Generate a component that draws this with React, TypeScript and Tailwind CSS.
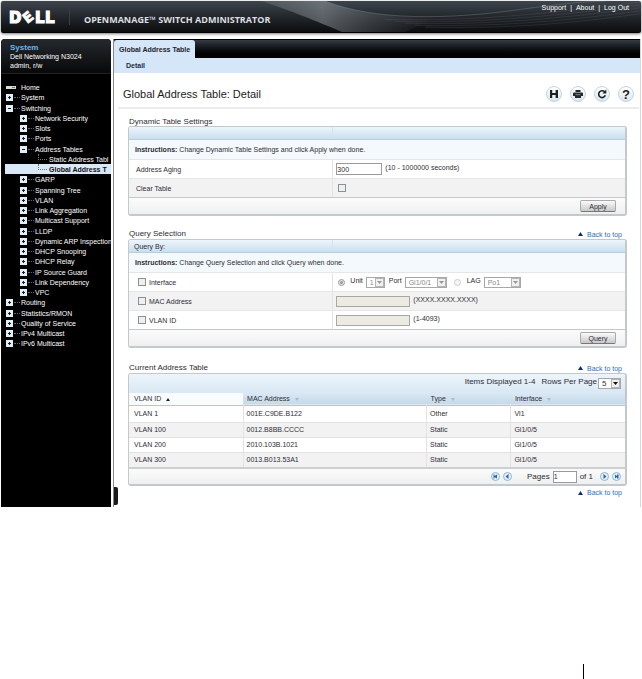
import type { ReactNode } from "react";

type TreeItem = {
  label: string;
  level: 0 | 1 | 2;
  icon?: "plus" | "minus" | "home";
  active?: boolean;
};

const tree: TreeItem[] = [
  { label: "Home", level: 0, icon: "home" },
  { label: "System", level: 0, icon: "plus" },
  { label: "Switching", level: 0, icon: "minus" },
  { label: "Network Security", level: 1, icon: "plus" },
  { label: "Slots", level: 1, icon: "plus" },
  { label: "Ports", level: 1, icon: "plus" },
  { label: "Address Tables", level: 1, icon: "minus" },
  { label: "Static Address Tabl", level: 2 },
  { label: "Global Address T", level: 2, active: true },
  { label: "GARP", level: 1, icon: "plus" },
  { label: "Spanning Tree", level: 1, icon: "plus" },
  { label: "VLAN", level: 1, icon: "plus" },
  { label: "Link Aggregation", level: 1, icon: "plus" },
  { label: "Multicast Support", level: 1, icon: "plus" },
  { label: "LLDP", level: 1, icon: "plus" },
  { label: "Dynamic ARP Inspection", level: 1, icon: "plus" },
  { label: "DHCP Snooping", level: 1, icon: "plus" },
  { label: "DHCP Relay", level: 1, icon: "plus" },
  { label: "IP Source Guard", level: 1, icon: "plus" },
  { label: "Link Dependency", level: 1, icon: "plus" },
  { label: "VPC", level: 1, icon: "plus" },
  { label: "Routing", level: 0, icon: "plus" },
  { label: "Statistics/RMON", level: 0, icon: "plus" },
  { label: "Quality of Service", level: 0, icon: "plus" },
  { label: "IPv4 Multicast", level: 0, icon: "plus" },
  { label: "IPv6 Multicast", level: 0, icon: "plus" },
];

const addresses = [
  { vlan: "VLAN 1", mac: "001E.C9DE.B122", type: "Other", iface: "Vl1" },
  { vlan: "VLAN 100", mac: "0012.B8BB.CCCC", type: "Static", iface: "Gi1/0/5" },
  { vlan: "VLAN 200", mac: "2010.103B.1021", type: "Static", iface: "Gi1/0/5" },
  { vlan: "VLAN 300", mac: "0013.B013.53A1", type: "Static", iface: "Gi1/0/5" },
];

function DellLogo() {
  return (
    <svg
      width="50"
      height="24"
      viewBox="0 0 50 24"
      role="img"
      aria-label="Dell"
      className="relative overflow-visible"
      fill="#fff"
      stroke="#fff"
      strokeWidth="1.2"
      fontFamily="DejaVu Sans"
      fontWeight="700"
      fontSize="15"
    >
      <text x="-1" y="18">D</text>
      <text x="13" y="17" fontSize="14" strokeWidth=".7" transform="rotate(-38 18 12)">E</text>
      <text x="25" y="18">L</text>
      <text x="35" y="18">L</text>
    </svg>
  );
}

function TreeIcon({ icon }: { icon: "plus" | "minus" | "home" }) {
  if (icon === "home") {
    return (
      <svg width="10" height="8" viewBox="0 0 10 8" aria-hidden="true">
        <rect x="0" y="3" width="10" height="3" fill="#d9dcdb" />
        <rect x="6" y="4" width="3" height="1" fill="#3f9a45" />
      </svg>
    );
  }
  return (
    <svg width="7" height="7" viewBox="0 0 7 7" className="shrink-0" aria-hidden="true">
      <rect width="7" height="7" fill="#e4eef5" />
      <rect x="2" y="3" width="3" height="1" fill="#16202b" />
      {icon === "plus" && <rect x="3" y="2" width="1" height="3" fill="#16202b" />}
    </svg>
  );
}

function TreeRow({ item }: { item: TreeItem }) {
  if (item.level === 2) {
    return (
      <li className="h-[10px] nth-[4n+2]:h-[11px] pl-[4px]">
        <a
          href="#"
          className={
            item.active
              ? "flex h-full items-center whitespace-nowrap bg-[#d9e8f7] pl-[33px] font-bold text-[#111]"
              : "flex h-full items-center whitespace-nowrap pl-[33px]"
          }
        >
          <span className="mr-[2px] h-[6px] w-[9px] shrink-0 self-start border-b border-l border-dotted border-[#777]" />
          {item.label}
        </a>
      </li>
    );
  }
  return (
    <li className="h-[10px] nth-[4n+2]:h-[11px]">
      <a
        href="#"
        className={
          item.level === 1
            ? "flex h-full items-center whitespace-nowrap pl-[19px]"
            : "flex h-full items-center whitespace-nowrap pl-[5px]"
        }
      >
        <TreeIcon icon={item.icon ?? "plus"} />
        {item.icon === "home" ? (
          <span className="w-[5px] shrink-0" />
        ) : (
          <span className="mx-[1px] w-[6px] shrink-0 border-t border-dotted border-[#666]" />
        )}
        {item.label}
      </a>
    </li>
  );
}

function Sidebar() {
  return (
    <aside className="w-[110px] shrink-0 overflow-hidden rounded-t-sm bg-black text-white">
      <div className="border-b border-[#222] bg-linear-to-b from-[#25292e] to-[#08090a] px-[9px] pt-[4px] pb-[3px] whitespace-nowrap leading-[9px]">
        <p className="text-[8px] font-bold text-[#6cb6ee]">System</p>
        <p>Dell Networking N3024</p>
        <p>admin, r/w</p>
      </div>
      <nav aria-label="Navigation tree" className="pt-[8px]">
        <ul>
          {tree.map((item) => (
            <TreeRow key={item.label} item={item} />
          ))}
        </ul>
      </nav>
    </aside>
  );
}

function RoundButton({ label, children }: { label: string; children: ReactNode }) {
  return (
    <button
      type="button"
      aria-label={label}
      className="flex size-[16px] items-center justify-center rounded-full border border-[#c3d3df] bg-linear-to-b from-white to-[#dbe6ee]"
    >
      {children}
    </button>
  );
}

function Toolbar() {
  return (
    <div className="flex gap-[8px]">
      <RoundButton label="Save">
        <svg width="10" height="10" viewBox="0 0 10 10">
          <path d="M1 1h8v8H1z" fill="#1d2126" />
          <path d="M3.2 1h3.4v3H3.2zM3.2 6h3.4v3H3.2z" fill="#eef3f7" />
        </svg>
      </RoundButton>
      <RoundButton label="Print">
        <svg width="10" height="10" viewBox="0 0 10 10" fill="#24282d">
          <path d="M2.5 1h5v2h-5zM1 3.4h8a1 1 0 0 1 1 1V7H0V4.400a1 1 0 0 1 1-1z" />
          <path d="M2 6h6v3H2z" />
          <path d="M2.500 5.500h5v.6h-5z" fill="#b9c2c9" />
        </svg>
      </RoundButton>
      <RoundButton label="Refresh">
        <svg width="10" height="10" viewBox="0 0 10 10">
          <path d="M7.600 2.900A3.400 3.400 0 1 0 8.300 6.200" fill="none" stroke="#1d2126" strokeWidth="1.600" />
          <path d="M9.300.6v3.800H5.500z" fill="#1d2126" />
        </svg>
      </RoundButton>
      <RoundButton label="Help">
        <span className="text-[13px] leading-none font-bold text-[#1d2126]">?</span>
      </RoundButton>
    </div>
  );
}

function BackToTop() {
  return (
    <a href="#top" className="flex items-center gap-[4px] pr-[5px] text-[#2f6dbb]">
      <svg width="5" height="4" viewBox="0 0 5 4" aria-hidden="true">
        <path d="M2.500 0L5 4H0z" fill="#0b2f6b" />
      </svg>
      Back to top
    </a>
  );
}

function Panel({ children }: { children: ReactNode }) {
  return (
    <div className="overflow-hidden rounded-[3px] border border-[#c2c8cc] border-r-2 border-b-2 bg-white">
      {children}
    </div>
  );
}

function PanelHeader({ children }: { children?: ReactNode }) {
  return (
    <div className="grid h-[13px] grid-cols-[41fr_59fr] items-center border-b border-[#b9cddb] bg-linear-to-b from-[#edf5fb] to-[#c9dff0]">
      <span className="pl-[5px]">{children}</span>
      <span className="h-full border-l border-[#d3e2ed]" />
    </div>
  );
}

function Instructions({ children }: { children: ReactNode }) {
  return (
    <p className="flex h-[19px] items-center bg-[#f3f9fd] pl-[6px] whitespace-pre">
      <b>Instructions: </b>
      {children}
    </p>
  );
}

function FormRow({ shaded, label, children }: { shaded?: boolean; label: ReactNode; children: ReactNode }) {
  return (
    <div
      className={
        shaded
          ? "grid h-[19px] grid-cols-[41fr_59fr] border-t border-[#e6e6e6] bg-[#f2f2f2]"
          : "grid h-[19px] grid-cols-[41fr_59fr] border-t border-[#e6e6e6]"
      }
    >
      <div className="flex items-center">{label}</div>
      <div className="flex items-center border-l border-[#e3e3e3] pl-[3px]">{children}</div>
    </div>
  );
}

function PanelFooter({ children }: { children: ReactNode }) {
  return (
    <div className="flex h-[17px] items-center justify-end border-t border-[#c2c8cc] bg-linear-to-b from-[#fbfbfb] to-[#eef0ef] pr-[9px]">
      {children}
    </div>
  );
}

function ActionButton({ children }: { children: string }) {
  return (
    <button
      type="button"
      className="flex h-[12px] w-[36px] items-center justify-center rounded-[2px] border border-[#a9a9a9] border-b-[#777] bg-linear-to-b from-[#fafafa] to-[#c9c9c9]"
    >
      {children}
    </button>
  );
}

function CheckBox({ id }: { id: string }) {
  return (
    <input
      type="checkbox"
      id={id}
      className="size-[8px] appearance-none border border-[#8b9096] bg-[#eeefef] checked:bg-[#5b7fa5]"
    />
  );
}

function Select({ id, options, disabled, width }: { id: string; options: string[]; disabled?: boolean; width: string }) {
  return (
    <span className={`relative flex h-[11px] ${width}`}>
      <select
        id={id}
        disabled={disabled}
        className="w-full appearance-none border border-[#a8a8a8] bg-white pl-[3px] leading-[9px] text-[#333] disabled:text-[#888] disabled:opacity-100"
      >
        {options.map((option) => (
          <option key={option}>{option}</option>
        ))}
      </select>
      <span className="pointer-events-none absolute inset-y-px right-px flex w-[9px] items-center justify-center border border-[#b5b5b5] bg-[#f0f0f0]">
        <svg width="5" height="3" viewBox="0 0 5 3" aria-hidden="true">
          <path d="M0 0h5L2.500 3z" fill={disabled ? "#999" : "#111"} />
        </svg>
      </span>
    </span>
  );
}

function PagerButton({ label, path }: { label: string; path: string }) {
  return (
    <button type="button" aria-label={label}>
      <svg width="9" height="9" viewBox="0 0 9 9" className="block">
        <circle cx="4.500" cy="4.500" r="4" fill="#e6f1fa" stroke="#8fb4d6" />
        <path d={path} fill="#2463ad" />
      </svg>
    </button>
  );
}

function SortMark({ active }: { active?: boolean }) {
  return (
    <svg width="4" height="3" viewBox="0 0 4 3" className="ml-[5px] inline-block align-middle" aria-hidden="true">
      {active ? <path d="M2 0l2 3H0z" fill="#222" /> : <path d="M0 0h4L2 3z" fill="#a9bccb" />}
    </svg>
  );
}

function DynamicTableSettings() {
  return (
    <section className="pt-[8px]">
      <h2 className="h-[9px] pl-px text-[8px] leading-[9px]">Dynamic Table Settings</h2>
      <Panel>
        <PanelHeader />
        <Instructions>Change Dynamic Table Settings and click Apply when done.</Instructions>
        <FormRow label={<label htmlFor="aging" className="pl-[7px]">Address Aging</label>}>
          <input
            id="aging"
            type="text"
            defaultValue="300"
            className="h-[12px] w-[46px] border border-[#9a9a9a] bg-white"
          />
          <span className="pb-[3px] pl-[3px]">(10 - 1000000 seconds)</span>
        </FormRow>
        <FormRow shaded label={<label htmlFor="clear" className="pl-[7px]">Clear Table</label>}>
          <span className="flex pl-[2px]">
            <CheckBox id="clear" />
          </span>
        </FormRow>
        <PanelFooter>
          <ActionButton>Apply</ActionButton>
        </PanelFooter>
      </Panel>
    </section>
  );
}

function QueryLabel({ id, children }: { id: string; children: string }) {
  return (
    <span className="flex items-center gap-[3px] pl-[9px]">
      <CheckBox id={id} />
      <label htmlFor={id}>{children}</label>
    </span>
  );
}

function QuerySelection() {
  return (
    <section className="pt-[13px]">
      <div className="flex h-[10px] justify-between pl-px leading-[9px]">
        <h2 className="text-[8px]">Query Selection</h2>
        <BackToTop />
      </div>
      <Panel>
        <PanelHeader>Query By:</PanelHeader>
        <Instructions>Change Query Selection and click Query when done.</Instructions>
        <FormRow label={<QueryLabel id="by-interface">Interface</QueryLabel>}>
          <input
            type="radio"
            name="interface"
            aria-label="Unit and port"
            defaultChecked
            disabled
            className="mr-[5px] ml-[2px] size-[7px] appearance-none rounded-full border border-[#aaa] bg-[#eee] checked:bg-[#999] checked:shadow-[inset_0_0_0_1px_#eee]"
          />
          <label htmlFor="unit" className="pr-[3px] pb-[3px]">Unit</label>
          <Select id="unit" options={["1"]} disabled width="w-[19px]" />
          <label htmlFor="port" className="pr-[3px] pb-[3px] pl-[4px]">Port</label>
          <Select id="port" options={["Gi1/0/1"]} disabled width="w-[42px]" />
          <input
            type="radio"
            name="interface"
            aria-label="LAG"
            disabled
            className="mr-[6px] ml-[7px] size-[7px] appearance-none rounded-full border border-[#ccc] bg-[#f6f6f6]"
          />
          <label htmlFor="lag" className="pr-[3px] pb-[3px]">LAG</label>
          <Select id="lag" options={["Po1"]} disabled width="w-[37px]" />
        </FormRow>
        <FormRow shaded label={<QueryLabel id="by-mac">MAC Address</QueryLabel>}>
          <input
            type="text"
            disabled
            aria-label="MAC Address value"
            className="h-[11px] w-[74px] border border-[#a8a8a0] bg-[#ebebe4]"
          />
          <span className="pb-[3px] pl-[3px]">(XXXX.XXXX.XXXX)</span>
        </FormRow>
        <FormRow label={<QueryLabel id="by-vlan">VLAN ID</QueryLabel>}>
          <input
            type="text"
            disabled
            aria-label="VLAN ID value"
            className="h-[11px] w-[74px] border border-[#a8a8a0] bg-[#ebebe4]"
          />
          <span className="pb-[3px] pl-[3px]">(1-4093)</span>
        </FormRow>
        <PanelFooter>
          <ActionButton>Query</ActionButton>
        </PanelFooter>
      </Panel>
    </section>
  );
}

function CurrentAddressTable() {
  return (
    <section className="pt-[15px]">
      <div className="flex h-[10px] justify-between pl-px leading-[9px]">
        <h2 className="text-[8px]">Current Address Table</h2>
        <BackToTop />
      </div>
      <Panel>
        <div className="flex h-[19px] items-center justify-end bg-linear-to-b from-[#edf5fb] to-[#d9e8f4] pr-[4px] text-[8px]">
          <span className="pr-[6px] pb-[5px]">Items Displayed 1-4</span>
          <label htmlFor="rows" className="pr-[1px] pb-[5px]">Rows Per Page</label>
          <Select id="rows" options={["5", "10", "20"]} width="w-[23px]" />
        </div>
        <table className="w-full table-fixed text-left">
          <colgroup>
            <col className="w-[23%]" />
            <col className="w-[37%]" />
            <col className="w-[17%]" />
            <col className="w-[23%]" />
          </colgroup>
          <thead>
            <tr className="h-[12px] border-b border-[#b0c8db] bg-linear-to-b from-[#d9e8f4] to-[#c5daeb]">
              <th className="bg-[#f9fcfe] py-0 pl-[5px] font-normal">VLAN ID<SortMark active /></th>
              <th className="py-0 pl-[4px] font-normal">MAC Address<SortMark /></th>
              <th className="py-0 pl-[4px] font-normal">Type<SortMark /></th>
              <th className="py-0 pl-[4px] font-normal">Interface<SortMark /></th>
            </tr>
          </thead>
          <tbody>
            {addresses.map((row) => (
              <tr key={row.vlan} className="h-[15px] border-b border-[#e2e2e2] first:h-[17px] even:bg-[#f2f2f2] last:border-0">
                <td className="py-0 pl-[5px]">{row.vlan}</td>
                <td className="border-l border-[#e3e3e3] py-0 pl-[3px]">{row.mac}</td>
                <td className="border-l border-[#e3e3e3] py-0 pl-[3px]">{row.type}</td>
                <td className="border-l border-[#e3e3e3] py-0 pl-[3px]">{row.iface}</td>
              </tr>
            ))}
          </tbody>
        </table>
        <div className="flex h-[17px] items-center justify-end gap-[3px] border-t-2 border-[#cdd0d2] bg-linear-to-b from-[#fbfbfb] to-[#eef0ef] pr-[4px]">
          <PagerButton label="First page" path="M2.500 2.500h1v1.500L6 2.500v4L3.500 5v1.500h-1z" />
          <PagerButton label="Previous page" path="M5.500 2v5l-3-2.500z" />
          <label htmlFor="page" className="pl-[12px] text-[8px]">Pages</label>
          <input
            id="page"
            type="text"
            defaultValue="1"
            className="h-[12px] w-[24px] border border-[#9a9a9a] bg-white"
          />
          <span className="pr-[4px] text-[8px]">of 1</span>
          <PagerButton label="Next page" path="M3.500 2v5l3-2.500z" />
          <PagerButton label="Last page" path="M3 2.500l2 1.500V2.500h1.500v4H5V5L3 6.500z" />
        </div>
      </Panel>
      <div className="flex justify-end pt-px">
        <BackToTop />
      </div>
    </section>
  );
}

export default function App() {
  return (
    <div id="top" className="flex min-h-screen flex-col bg-white px-px pt-px font-['Liberation_Sans',Arial,sans-serif] text-[7px] leading-[11px] text-[#2e2c35]">
      <header className="relative flex h-[32px] items-center rounded-[2px] border-b border-black bg-linear-to-b from-[#3d454d] to-[#0c0d0f] pl-[9px] shadow-[0_1px_3px_#777]">
        <svg
          className="absolute inset-y-0 right-0 h-full w-[386px]"
          viewBox="0 0 386 32"
          preserveAspectRatio="none"
          fill="none"
          aria-hidden="true"
        >
          <defs>
            <linearGradient id="beam">
              <stop offset="0" stopColor="#8a9299" stopOpacity=".25" />
              <stop offset=".35" stopColor="#a4abb1" stopOpacity=".45" />
              <stop offset="1" stopColor="#6a7178" stopOpacity="0" />
            </linearGradient>
          </defs>
          <path d="M7 0h63c30 12 70 17 110 17l-30 15H87C60 20 40 12 7 0z" fill="url(#beam)" />
          <path d="M70 0c50 20 120 20 200 8 30-4 50-7 80-8" stroke="#7d868e" strokeWidth=".7" opacity=".6" />
          <path
            d="M130 19c80 2 150-4 256-18M140 21c80 2 150-4 246-17M150 23c80 2 150-4 236-16M160 25c80 2 150-4 226-15M170 27c80 2 150-4 216-14"
            stroke="#7d868e"
            strokeWidth=".5"
            opacity=".35"
          />
        </svg>
        <DellLogo />
        <span className="ml-[9px] h-[16px] w-px bg-[#3b4046]" />
        <h1 className="relative ml-[14px] pt-[5px] font-['Open_Sans'] text-[9px] font-bold whitespace-nowrap text-[#dcdfe1]">
          OPENMANAGE™ SWITCH ADMINISTRATOR
        </h1>
        <nav className="relative mb-[18px] ml-auto flex gap-[4px] pr-[12px] text-white">
          <a href="#">Support</a>
          <span>|</span>
          <a href="#">About</a>
          <span>|</span>
          <a href="#">Log Out</a>
        </nav>
      </header>

      <div className="mt-[6px] flex">
        <Sidebar />
        <main className="relative ml-[2px] min-w-0 flex-1 border-r border-l border-[#d8d8d8] border-l-[#888] pb-[9px]">
          <div className="flex h-[19px] border-t border-black bg-linear-to-b from-[#343c44] to-black">
            <a href="#" className="flex items-center rounded-t-[3px] bg-[#d5e6f8] px-[5px] font-bold text-[#22242c]">
              Global Address Table
            </a>
          </div>
          <div className="flex h-[15px] items-center bg-[#d5e6f8] pl-[12px]">
            <a href="#" className="font-bold text-[#22304a]">Detail</a>
          </div>
          <div className="mr-px ml-[4px] flex h-[36px] items-center justify-between border-b-2 border-[#ebebeb] pr-[5px] pt-[8px] pl-[5px]">
            <h2 className="text-[11px] leading-[16px] text-[#1c1c1c]">Global Address Table: Detail</h2>
            <Toolbar />
          </div>
          <div className="pr-[13px] pl-[14px]">
            <DynamicTableSettings />
            <QuerySelection />
            <CurrentAddressTable />
          </div>
          <span className="absolute bottom-[2px] left-0 h-[18px] w-[4px] rounded-r-[2px] bg-[#1a1a1a]" />
        </main>
      </div>
      <div className="mt-auto mr-[57px] h-[15px] w-px self-end bg-black" />
    </div>
  );
}
